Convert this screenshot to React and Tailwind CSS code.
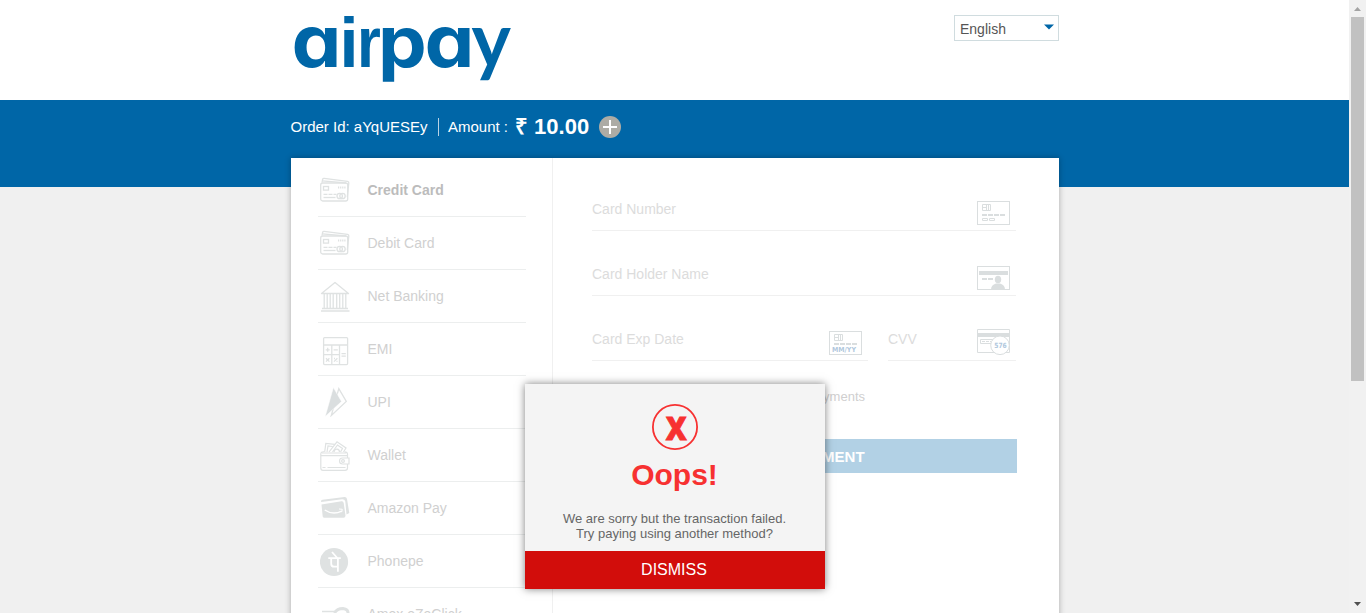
import React from "react";

const LINE = "#dfe2e2";
const FILL = "#dadedf";

function CardsIcon() {
  return (
    <svg width="30" height="26" viewBox="0 0 30 26" fill="none" stroke={LINE} strokeWidth="1.300">
      <path d="M2 5.500 L2.600 2.300 Q3 1.200 4.200 1.300 L27.500 4.400 Q29 4.700 28.800 6 L27.300 20" />
      <path d="M2.400 3.800 L26 6" />
      <rect x="0.700" y="6" width="27" height="18" rx="2" />
      <rect x="3.500" y="9.500" width="5" height="3.600" />
      <path d="M18 10.500h7.500" strokeWidth="2" strokeDasharray="1.200 0.900" />
      <path d="M3.500 17.300h13" strokeDasharray="4 1" />
      <path d="M3.500 20.500h12" />
      <circle cx="19.700" cy="19" r="2.700" />
      <circle cx="22.500" cy="19" r="2.700" />
    </svg>
  );
}

function BankIcon() {
  return (
    <svg width="30" height="32" viewBox="0 0 30 32" fill="none" stroke={LINE} strokeWidth="1.300" className="mt-[2px]">
      <path d="M1.500 12.500 L15 1.500 L28.500 12.500 Z" strokeLinejoin="round" />
      <path d="M4.200 13v14M7.200 13v14M10.200 13v14M13.200 13v14M16.700 13v14M19.700 13v14M22.800 13v14M25.800 13v14" />
      <path d="M2 27.500h26M1 30h28.500" strokeWidth="1.700" />
    </svg>
  );
}

function EmiIcon() {
  return (
    <svg width="30" height="30" viewBox="0 0 30 30" fill="none" stroke={LINE} strokeWidth="1.300" className="mt-[3px]">
      <rect x="3.600" y="1.600" width="24" height="27" rx="1" />
      <path d="M3.600 9h24M11.800 9v19.500M19.500 9v19.500M3.600 18.600h15.900" />
      <path d="M5.700 13.800h4M7.700 11.800v4M13.600 13.800h4.200M21.500 17.600h4.300M21.500 20.200h4.300M6 22.200l3.400 3.400M9.400 22.200l-3.400 3.400M14 25.600l3.400-3.400" />
      <path d="M14 22.500h1M16.500 25.300h1" />
    </svg>
  );
}

function UpiIcon() {
  return (
    <svg width="30" height="30" viewBox="0 0 30 30">
      <path d="M18.800 1.600 L26.300 14.500 L11.300 28.500 Z" fill="none" stroke={LINE} strokeWidth="1.300" />
      <path d="M13.400 0.500 L21.500 14.500 L5.200 29.500 Z" fill={FILL} stroke="#fff" strokeWidth="0.500" />
    </svg>
  );
}

function WalletIcon() {
  return (
    <svg width="31" height="32" viewBox="0 0 31 32" fill="none" stroke={LINE} strokeWidth="1.200" className="mt-[2px] shrink-0">
      <path d="M4.700 12 L5.800 3.500 L15 4.300M7 12 L8 6 L12.500 6.500M9 12 L17 1.800 L26 8 L23.500 12M12.500 12 L17.500 5 L22.500 8.500 L20.500 12" />
      <path d="M14 12 Q14.500 9 17 9.200 Q19.500 9.500 19.500 12" />
      <path d="M4 11.800 Q0.800 11.500 0.800 14 V28 Q0.800 30.300 3 30.300 H25 Q27.500 30.300 27.500 28 V24M27.500 18 V14 Q27.500 12 24.500 11.800" />
      <path d="M2 13h24M1 15.700h26" />
      <path d="M2.500 27.500h3M7.500 27.500h18" />
      <path d="M29 18h-6.500a3 3 0 0 0 0 6H29Z" />
      <circle cx="23" cy="21" r="1.400" />
    </svg>
  );
}

function AmazonPayIcon() {
  return (
    <svg width="30" height="24" viewBox="0 0 30 24" className="-mt-[3px]">
      <path d="M1 6 Q1 5 2.500 4.700 L24.500 2 Q26.500 1.800 27 4 L29.300 18 L26.500 19.500 L25.300 6.500 Q24.800 4 22 4.200 L1.200 7Z" fill={LINE} />
      <path d="M1.500 9.500 L21.500 6.300 Q23.300 6 23.700 8 L25.500 20.500 Q25.500 22.800 23.500 22.800 H4.500 Q3 22.800 2.700 21.500 Z" fill={LINE} />
      <path d="M4.700 15 Q13 20.500 21.700 16.100" stroke="#fff" strokeWidth="1.400" fill="none" />
      <path d="M19 14 L22.300 14.300 L21.700 17.200" stroke="#fff" strokeWidth="1" fill="none" />
    </svg>
  );
}

function PhonepeIcon() {
  return (
    <svg width="30" height="30" viewBox="0 0 30 30" className="mt-px">
      <circle cx="14" cy="15" r="14.100" fill={LINE} />
      <path
        d="M8.300 11.200h12.500M12 5l5.300 6M11.200 11.200v5.500q0 3 3 3h3.500M17.900 11.200v13.500"
        stroke="#fff"
        strokeWidth="1.800"
        fill="none"
      />
    </svg>
  );
}

function EzeClickIcon() {
  return (
    <svg width="30" height="24" viewBox="0 0 30 24" fill="none" stroke={LINE} className="mt-[7px]">
      <path d="M2 5.500h13M5 10h9" strokeWidth="1.300" />
      <path d="M14.500 7 Q17 2.500 23 2.500 Q28.500 3 28 8 Q26 14 17 14" strokeWidth="3" />
    </svg>
  );
}

function ChipLines({ children }) {
  return (
    <svg width="33" height="24" viewBox="0 0 33 24" fill="none" stroke={FILL}>
      <rect x="0.500" y="0.500" width="32" height="23" />
      <path d="M5.500 3.500h8v6h-8zM9.500 3.500v6M11.500 3.500v6M5.500 6.500h4" />
      {children}
    </svg>
  );
}

function NumberIcon() {
  return (
    <ChipLines>
      <path d="M5 14h23" strokeWidth="2" strokeDasharray="5 1" />
      <path d="M5.500 17.500h5v2h-5zM12.500 17.500h5v2h-5z" />
    </ChipLines>
  );
}

function ExpiryIcon() {
  return (
    <ChipLines>
      <path d="M5 13h23" strokeWidth="2" strokeDasharray="5 1" />
      <text x="3" y="21.300" fill="#b0c7dd" stroke="none" fontFamily="DejaVu Sans" fontWeight="700" fontSize="7" textLength="24" lengthAdjust="spacingAndGlyphs">
        MM/YY
      </text>
    </ChipLines>
  );
}

function HolderIcon() {
  return (
    <svg width="33" height="24" viewBox="0 0 33 24">
      <rect x="0.500" y="0.500" width="32" height="23" fill="none" stroke={FILL} />
      <path d="M2 5h29v4H2z" fill={FILL} />
      <path d="M5 13h11" strokeWidth="2" strokeDasharray="5 1" stroke={FILL} />
      <ellipse cx="21" cy="13.500" rx="3.200" ry="3.800" fill={FILL} />
      <path d="M14 23.500 Q14 19 19 17.500 H23 Q28 19 28 23.500Z" fill={FILL} />
    </svg>
  );
}

function CvvIcon() {
  return (
    <svg width="34" height="27" viewBox="0 0 34 27">
      <path d="M0.500 0.500h32v23h-32z" fill="none" stroke={FILL} />
      <path d="M0 4h33v4H0z" fill={FILL} />
      <path d="M3.500 10.500h12v4h-12z" fill="none" stroke={FILL} />
      <path d="M5 12.500h9" stroke={FILL} strokeDasharray="3 1" />
      <circle cx="23" cy="16.300" r="9.300" fill="#fff" stroke={FILL} />
      <text x="17.300" y="18.700" fill="#b0c7dd" fontFamily="DejaVu Sans" fontWeight="700" fontSize="7.200" textLength="12.500" lengthAdjust="spacingAndGlyphs">
        576
      </text>
    </svg>
  );
}

const METHODS = [
  { label: "Credit Card", icon: CardsIcon, active: true },
  { label: "Debit Card", icon: CardsIcon },
  { label: "Net Banking", icon: BankIcon },
  { label: "EMI", icon: EmiIcon },
  { label: "UPI", icon: UpiIcon },
  { label: "Wallet", icon: WalletIcon },
  { label: "Amazon Pay", icon: AmazonPayIcon },
  { label: "Phonepe", icon: PhonepeIcon },
  { label: "Amex eZeClick", icon: EzeClickIcon },
];

// Each letter sits on the shared baseline with its own width.
const LOGO_LETTERS = [
  { char: "a", x: 291.5, sx: 1.1, sy: 1, font: "Inter", size: 72 },
  { char: "i", x: 339.5, sx: 0.95, sy: 0.99, font: "Liberation Sans", size: 72 },
  { char: "r", x: 357, sx: 0.84, sy: 1, font: "Liberation Sans", size: 73 },
  { char: "p", x: 378, sx: 1.06, sy: 0.97, font: "Inter", size: 73 },
  { char: "a", x: 424.5, sx: 1.1, sy: 1, font: "Inter", size: 72 },
  { char: "y", x: 471.5, sx: 0.97, sy: 1, font: "Lato", size: 77 },
];

function Logo() {
  return (
    <svg className="mt-[5px] ml-1 block overflow-visible" width="222" height="90" viewBox="295 5 222 90" role="img" aria-label="airpay">
      {LOGO_LETTERS.map(({ char, x, sx, sy, font, size }, i) => (
        <text
          key={i}
          transform={`translate(${x} 67) scale(${sx} ${sy})`}
          fill="#0066a7"
          fontFamily={font}
          fontWeight="700"
          fontSize={size}
          style={{ fontFeatureSettings: '"cv11"' }}
        >
          {char}
        </text>
      ))}
    </svg>
  );
}

function Field({ label, icon, className }) {
  return (
    <div className={"flex h-[65px] items-end justify-between border-b border-[#f0f0f0] pr-[6px] text-[14px] text-[#dcdcdc] " + className}>
      <span className="mb-[13px] leading-4">{label}</span>
      {icon}
    </div>
  );
}

function Modal() {
  return (
    <div className="absolute top-[384px] left-[525px] flex h-[205px] w-[300px] flex-col bg-[#f4f4f4] text-center shadow-[0_0_8px_rgba(0,0,0,0.5)]">
      <div className="flex flex-1 flex-col items-center pt-5">
        <svg width="46" height="46" viewBox="0 0 46 46">
          <circle cx="23" cy="23" r="22.100" fill="none" stroke="#f73131" strokeWidth="1.800" />
          <text x="24.300" y="35.700" textAnchor="middle" fill="#f73131" stroke="#f73131" strokeWidth="0.800" fontFamily="Open Sans" fontWeight="800" fontSize="31" textLength="21" lengthAdjust="spacingAndGlyphs">
            X
          </text>
        </svg>
        <h2 className="mt-[7px] -ml-px text-[30px] leading-[36px] font-bold text-[#f73131]">Oops!</h2>
        <p className="mt-[18px] -ml-px text-[13px] leading-[15px] text-[#666]">
          We are sorry but the transaction failed.
          <br />
          Try paying using another method?
        </p>
      </div>
      <button className="h-[38px] bg-[#d20d0b] pr-[2px] text-[16px] text-white">DISMISS</button>
    </div>
  );
}

export default function App() {
  return (
    <div className="relative flex h-[613px] w-[1366px] overflow-hidden bg-[#f0f0f0] font-['Liberation_Sans',Arial,sans-serif]">
      <div className="flex w-[1349px] flex-col">
        <header className="flex h-[100px] shrink-0 justify-between bg-white pr-[290px] pl-[291px]">
          <Logo />
          <div className="mt-[15px] flex h-[26px] w-[105px] items-center justify-between border border-[#d0dcdf] pr-1 pl-[5px] text-[14px] text-[#555]">
            <span className="pt-[2px]">English</span>
            <svg width="10" height="6" viewBox="0 0 10 6" className="mb-[2px]">
              <path d="M0 0.500h10L5 5.500z" fill="#0066a7" />
            </svg>
          </div>
        </header>
        <div className="h-[87px] shrink-0 bg-[#0066a7] pl-[290.5px]">
          <div className="flex h-[54px] items-center text-[15px] whitespace-nowrap text-white">
            <span className="w-[147.5px]">Order Id: aYqUESEy</span>
            <span className="h-[18px] w-px bg-[#b9d3e5]" />
            <span className="ml-[9px] w-[67px]">Amount :</span>
            <span className="w-[84px] pb-[2px] text-[22px] font-bold">₹ 10.00</span>
            <svg width="22" height="22" viewBox="0 0 22 22">
              <circle cx="11" cy="11" r="11" fill="#adaca5" />
              <path d="M11 4v14M4 11h14" stroke="#fff" strokeWidth="2" />
            </svg>
          </div>
        </div>
        <main className="-mt-[29px] ml-[291px] flex h-[500px] w-[768px] shrink-0 bg-white shadow-[0_0_6px_rgba(0,0,0,0.3)]">
          <nav className="w-[262px] shrink-0 border-r border-[#f0f0f0] pt-[6px] pl-[27px]">
            {METHODS.map(({ label, icon: Icon, active }) => (
              <div key={label} className="flex h-[53px] w-[208px] items-center border-b border-[#eceeee] pl-[2px]">
                <div className="flex w-[47.5px] shrink-0 items-center">
                  <Icon />
                </div>
                <span className={active ? "text-[14px] font-bold text-[#bcbcbc]" : "text-[14px] text-[#d0d0d0]"}>{label}</span>
              </div>
            ))}
          </nav>
          <section className="w-[464px] pt-2 pl-[39px]">
            <Field className="w-[424px]" label="Card Number" icon={<div className="mb-[5px]"><NumberIcon /></div>} />
            <Field className="w-[424px]" label="Card Holder Name" icon={<div className="mb-[5px]"><HolderIcon /></div>} />
            <div className="flex w-[424px] justify-between">
              <Field className="w-[276px]" label="Card Exp Date" icon={<div className="mb-[5px]"><ExpiryIcon /></div>} />
              <Field className="w-[128px]" label="CVV" icon={<div className="-mr-px mb-1"><CvvIcon /></div>} />
            </div>
            <p className="mt-7 w-[273px] text-right text-[13px] leading-4 whitespace-nowrap text-[#d0cfd0]">Save this card for faster payments</p>
            <button className="mt-[34px] h-[34px] w-[425px] bg-[#b2d1e5] pt-[2px] pl-px text-[15px] font-bold text-white">MAKE PAYMENT</button>
          </section>
        </main>
      </div>
      <div className="flex w-[17px] flex-col items-center bg-[#f1f1f1]">
        <svg width="17" height="17" viewBox="0 0 17 17" className="shrink-0">
          <path d="M5 11h7L8.500 7z" fill="#a3a3a3" />
        </svg>
        <div className="h-[364px] w-[13px] bg-[#c1c1c1]" />
        <div className="flex-1" />
        <svg width="17" height="17" viewBox="0 0 17 17" className="shrink-0">
          <path d="M5 6h7L8.500 10z" fill="#505050" />
        </svg>
      </div>
      <Modal />
    </div>
  );
}
